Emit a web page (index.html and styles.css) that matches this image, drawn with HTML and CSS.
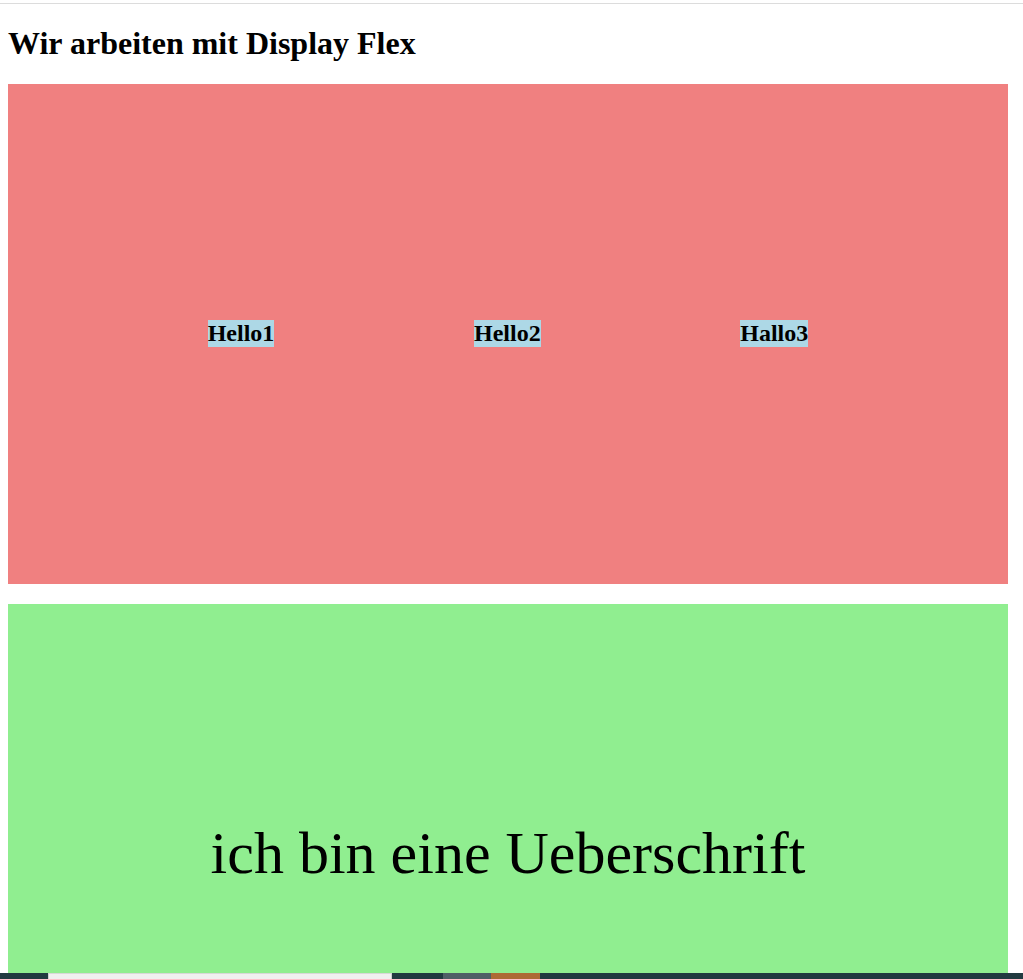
FILE: index.html
```html
<!DOCTYPE html>
<html lang="de">
<head>
<meta charset="utf-8">
<title>Display Flex</title>
<link rel="stylesheet" href="styles.css">
</head>
<body>
<div class="topline"></div>
<main class="page">
  <h1 class="title">Wir arbeiten mit Display Flex</h1>
  <section class="box box-red">
    <h2 class="item">Hello1</h2>
    <h2 class="item">Hello2</h2>
    <h2 class="item">Hallo3</h2>
  </section>
  <section class="box box-green">
    <h1 class="big">ich bin eine Ueberschrift</h1>
  </section>
</main>
<div class="taskbar">
  <span class="seg seg-dark seg-a"></span>
  <span class="seg seg-light"></span>
  <span class="seg seg-dark seg-b"></span>
  <span class="seg seg-gray"></span>
  <span class="seg seg-orange"></span>
  <span class="seg seg-dark seg-rest"></span>
</div>
</body>
</html>
```

FILE: styles.css
```css
html, body {
  margin: 0;
  padding: 0;
  background: #ffffff;
  font-family: "Liberation Serif", "Times New Roman", serif;
  color: #000;
}

.topline {
  height: 3px;
  border-bottom: 1px solid #dcdcdc;
}

.page {
  margin: 0 8px;
  width: 1000px;
}

.title {
  font-size: 32px;
  font-weight: bold;
  margin: 21.44px 0;
}

.box {
  width: 1000px;
  height: 500px;
  display: flex;
  align-items: center;
}

.box-red {
  background: #f08080;
  justify-content: space-evenly;
  margin-bottom: 20px;
}

.item {
  margin: 0;
  font-size: 24px;
  font-weight: bold;
  background: #add8e6;
}

.box-green {
  background: #90ee90;
  justify-content: center;
}

.big {
  margin: 0;
  font-size: 60px;
  font-weight: normal;
}

.taskbar {
  position: fixed;
  left: 0;
  right: 0;
  bottom: 0;
  height: 6px;
  display: flex;
}

.seg { display: block; height: 100%; }
.seg-dark { background: #213a40; }
.seg-a { width: 48px; }
.seg-light {
  width: 342px;
  background: #f0f0f0;
  border-left: 1px solid #cfcfcf;
  border-right: 1px solid #cfcfcf;
  border-top: 1px solid #d8d8d8;
  box-sizing: border-box;
  width: 344px;
}
.seg-b { width: 51px; }
.seg-gray { width: 48px; background: #4f5f66; }
.seg-orange { width: 49px; background: #ad6a35; }
.seg-rest { flex: 1; }
```
